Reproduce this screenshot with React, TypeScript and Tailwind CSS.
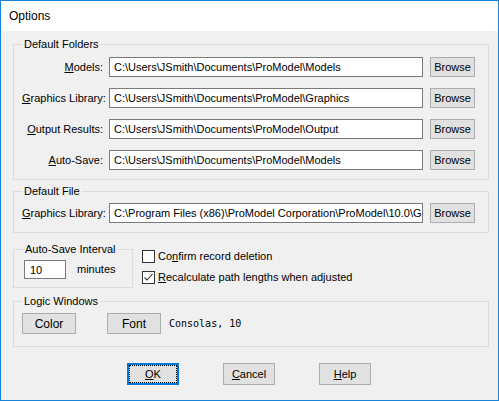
import type { ReactNode } from "react";

const Group = ({
  title,
  className,
  legendClass,
  children,
}: {
  title: string;
  className: string;
  legendClass: string;
  children: ReactNode;
}) => (
  <fieldset className={`border border-[#dcdcdc] ${className}`}>
    <legend className={`leading-[13px] ${legendClass}`}>{title}</legend>
    {children}
  </fieldset>
);

const PathRow = ({ label, value }: { label: ReactNode; value: string }) => (
  <div className="flex items-center h-[20px]">
    <span className="w-[81px] text-right whitespace-nowrap">{label}</span>
    <input
      readOnly
      value={value}
      className="ml-[6px] w-[314px] h-[20px] border border-[#7a7a7a] bg-white pl-[4px] pr-0 outline-none"
    />
    <button className="ml-[7px] w-[45px] h-[20px] border border-[#adadad] bg-[#e1e1e1] leading-[18px]">
      Browse
    </button>
  </div>
);

const CheckRow = ({ checked, children }: { checked?: boolean; children: ReactNode }) => (
  <div className="flex items-center h-[13px]">
    <span className="w-[13px] h-[13px] border border-[#333333] bg-white flex items-center justify-center">
      {checked && (
        <svg width="11" height="11" viewBox="0 0 11 11">
          <polyline points="1.5,5.5 4,8 9.5,2" fill="none" stroke="#333333" strokeWidth="1.1" />
        </svg>
      )}
    </span>
    <span className="ml-[3px] whitespace-nowrap">{children}</span>
  </div>
);

const Btn = ({ children, className }: { children: ReactNode; className: string }) => (
  <button className={`border border-[#adadad] bg-[#e1e1e1] ${className}`}>{children}</button>
);

export default function App() {
  return (
    <div className="w-[499px] h-[401px] border border-[#1883d7] bg-[#f0f0f0] text-black text-[11px] [font-family:'Liberation_Sans',Arial,sans-serif] overflow-hidden">
      <div className="h-[30px] bg-white pl-[8px] flex items-center text-[12px]">Options</div>

      <div className="flex flex-col pl-[12px]">
        <Group
          title="Default Folders"
          className="mt-[7px] w-[476px] px-[8px] pt-[6px] pb-[9px]"
          legendClass="px-[2px]"
        >
          <div className="flex flex-col gap-[11px]">
            <PathRow
              label={<><u>M</u>odels:</>}
              value="C:\Users\JSmith\Documents\ProModel\Models"
            />
            <PathRow
              label={<><u>G</u>raphics Library:</>}
              value="C:\Users\JSmith\Documents\ProModel\Graphics"
            />
            <PathRow
              label={<><u>O</u>utput Results:</>}
              value="C:\Users\JSmith\Documents\ProModel\Output"
            />
            <PathRow
              label={<><u>A</u>uto-Save:</>}
              value="C:\Users\JSmith\Documents\ProModel\Models"
            />
          </div>
        </Group>

        <Group
          title="Default File"
          className="mt-[5px] w-[476px] px-[8px] pt-[5px] pb-[9px]"
          legendClass="px-[2px]"
        >
          <PathRow
            label={<><u>G</u>raphics Library:</>}
            value="C:\Program Files (x86)\ProModel Corporation\ProModel\10.0\Graphics"
          />
        </Group>

        <div className="flex mt-[10px]">
          <Group
            title="Auto-Save Interval"
            className="w-[120px] pl-[10px] pt-[4px] pb-[8px]"
            legendClass="px-[1px]"
          >
            <div className="flex items-center">
              <input
                readOnly
                value="10"
                className="w-[42px] h-[19px] border border-[#7a7a7a] bg-white pl-[5px] outline-none"
              />
              <span className="ml-[11px]">minutes</span>
            </div>
          </Group>
          <div className="ml-[9px] pt-[7px] flex flex-col gap-[8px]">
            <CheckRow>
              Co<u>n</u>firm record deletion
            </CheckRow>
            <CheckRow checked>
              <u>R</u>ecalculate path lengths when adjusted
            </CheckRow>
          </div>
        </div>

        <Group
          title="Logic Windows"
          className="mt-[7px] w-[476px] pl-[8px] pt-[5px] pb-[12px]"
          legendClass="px-[2px]"
        >
          <div className="flex items-center">
            <Btn className="w-[54px] h-[21px] text-[12px]">Color</Btn>
            <Btn className="ml-[31px] w-[54px] h-[21px] text-[12px]">Font</Btn>
            <span className="ml-[8px] text-[10px] [font-family:'DejaVu_Sans_Mono',monospace]">Consolas, 10</span>
          </div>
        </Group>

        <div className="flex gap-[44px] pl-[114px] mt-[16px]">
          <button className="w-[52px] h-[22px] border-2 border-[#0078d7] bg-[#e1e1e1] p-0">
            <span className="block w-full h-full border border-dotted border-black leading-[16px]">
              <u>O</u>K
            </span>
          </button>
          <Btn className="w-[52px] h-[22px]">
            <u>C</u>ancel
          </Btn>
          <Btn className="w-[52px] h-[22px]">
            <u>H</u>elp
          </Btn>
        </div>
      </div>
    </div>
  );
}
